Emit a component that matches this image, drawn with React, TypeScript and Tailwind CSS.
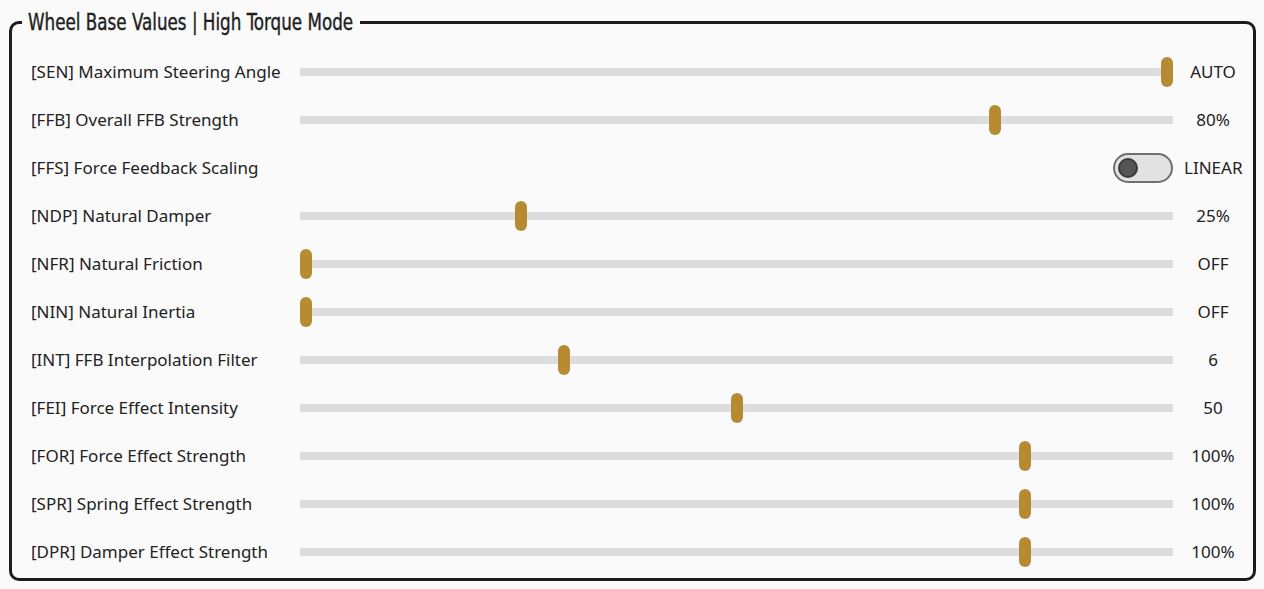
import React from "react";

type Row =
  | { code: string; label: string; kind: "slider"; pct: number; value: string }
  | { code: string; label: string; kind: "toggle"; value: string };

const rows: Row[] = [
  { code: "SEN", label: "Maximum Steering Angle", kind: "slider", pct: 1, value: "AUTO" },
  { code: "FFB", label: "Overall FFB Strength", kind: "slider", pct: 0.8, value: "80%" },
  { code: "FFS", label: "Force Feedback Scaling", kind: "toggle", value: "LINEAR" },
  { code: "NDP", label: "Natural Damper", kind: "slider", pct: 0.25, value: "25%" },
  { code: "NFR", label: "Natural Friction", kind: "slider", pct: 0, value: "OFF" },
  { code: "NIN", label: "Natural Inertia", kind: "slider", pct: 0, value: "OFF" },
  { code: "INT", label: "FFB Interpolation Filter", kind: "slider", pct: 0.3, value: "6" },
  { code: "FEI", label: "Force Effect Intensity", kind: "slider", pct: 0.5, value: "50" },
  { code: "FOR", label: "Force Effect Strength", kind: "slider", pct: 0.835, value: "100%" },
  { code: "SPR", label: "Spring Effect Strength", kind: "slider", pct: 0.835, value: "100%" },
  { code: "DPR", label: "Damper Effect Strength", kind: "slider", pct: 0.835, value: "100%" },
];

const Slider = ({ pct }: { pct: number }) => (
  <div className="relative flex h-[30px] flex-1 items-center">
    <div className="h-[8px] w-full bg-[#dddddd]" />
    <div
      className="absolute top-0 h-[30px] w-[12px] rounded-full bg-[#b78b32]"
      style={{ left: `calc((100% - 12px) * ${pct})` }}
    />
  </div>
);

const Toggle = () => (
  <div className="flex flex-1 justify-end">
    <div className="flex h-[30px] w-[60px] items-center rounded-full border-2 border-[#6f6f6f] bg-[#e2e2e2] px-[3px]">
      <div className="h-[20px] w-[20px] rounded-full border-2 border-[#3a3a3a] bg-[#555555]" />
    </div>
  </div>
);

export default function App() {
  return (
    <div className="min-h-[589px] bg-[#fafafa] pt-[8px] font-['Noto_Sans',sans-serif] text-[#222]">
      <fieldset className="ml-[9px] mr-[8px] rounded-[10px] border-[3px] border-[#1c1c1c] pb-[11px] pl-[19px] pr-[8px]">
        <legend className="-ml-[9px] px-[6px] font-['DejaVu_Sans_Condensed',sans-serif] text-[23px] leading-[28px] text-[#1e1e1e]">
          <span className="block w-[326px] whitespace-nowrap">
            <span className="inline-block origin-left scale-x-[0.81] [-webkit-text-stroke:0.4px_#1e1e1e]">Wheel Base Values | High Torque Mode</span>
          </span>
        </legend>
        <div className="flex flex-col gap-[18px] pt-[21px]">
          {rows.map((r) => (
            <div key={r.code} className="flex h-[30px] items-center">
              <div className="w-[269px] text-[17px] leading-[22px]">
                [{r.code}] {r.label}
              </div>
              {r.kind === "slider" ? <Slider pct={r.pct} /> : <Toggle />}
              <div className="w-[72px] pl-[11px] pr-[3px] text-center text-[17px] leading-[22px]">{r.value}</div>
            </div>
          ))}
        </div>
      </fieldset>
    </div>
  );
}
